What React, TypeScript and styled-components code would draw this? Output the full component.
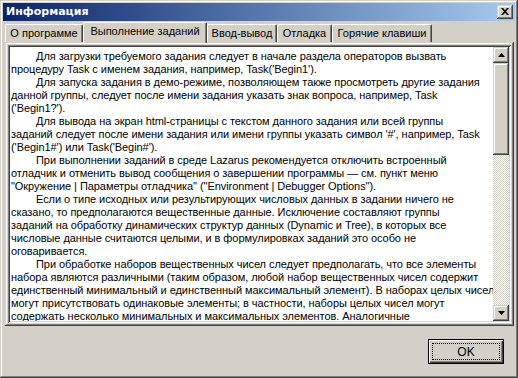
import React from "react";
import styled, { createGlobalStyle } from "styled-components";

const Global = createGlobalStyle`
  html, body { margin: 0; padding: 0; background: #D4D0C8; }
  body { width: 518px; height: 378px; overflow: hidden; }
`;

const raised = `
  box-shadow: inset -1px -1px #404040, inset 1px 1px #D4D0C8,
    inset -2px -2px #808080, inset 2px 2px #FFFFFF;
`;

const Window = styled.div`
  box-sizing: border-box;
  width: 518px;
  height: 378px;
  padding: 3px;
  background: #D4D0C8;
  ${raised}
  display: flex;
  flex-direction: column;
  font-family: "Liberation Sans", Arial, sans-serif;
  color: #000;
`;

const TitleBar = styled.div`
  height: 18px;
  flex: none;
  display: flex;
  align-items: center;
  justify-content: space-between;
  padding: 0 2px 0 3px;
  background: linear-gradient(to right, #0a246a, #a6caf0);
`;

const Title = styled.span`
  font-family: "DejaVu Sans", sans-serif;
  font-weight: bold;
  font-size: 11px;
  color: #fff;
  line-height: 18px;
`;

const CloseButton = styled.div`
  box-sizing: border-box;
  width: 16px;
  height: 14px;
  background: #D4D0C8;
  ${raised}
  display: flex;
  align-items: center;
  justify-content: center;
  padding: 0 1px 1px 0;
`;

const TabStrip = styled.div`
  height: 21px;
  flex: none;
  display: flex;
  align-items: flex-end;
  padding-left: 2px;
`;

const Tab = styled.div<{ $w: number; $active?: boolean }>`
  box-sizing: border-box;
  width: ${(p) => p.$w}px;
  height: ${(p) => (p.$active ? 21 : 18)}px;
  margin-bottom: ${(p) => (p.$active ? -1 : 0)}px;
  position: relative;
  z-index: ${(p) => (p.$active ? 2 : 0)};
  background: #D4D0C8;
  border-top: 1px solid #fff;
  border-left: 1px solid #fff;
  border-right: 1px solid #404040;
  border-radius: 2px 2px 0 0;
  box-shadow: inset -1px 0 #808080;
  font-size: 11px;
  line-height: ${(p) => (p.$active ? 17 : 16)}px;
  text-align: center;
  white-space: nowrap;
`;

const Panel = styled.div`
  box-sizing: border-box;
  height: 284px;
  flex: none;
  margin: 0 1px 0 2px;
  padding: 3px;
  background: #D4D0C8;
  ${raised}
`;

const Memo = styled.div`
  box-sizing: border-box;
  height: 100%;
  display: flex;
  padding: 2px;
  background: #fff;
  box-shadow: inset 1px 1px #808080, inset -1px -1px #fff,
    inset 2px 2px #404040, inset -2px -2px #D4D0C8;
`;

const TextArea = styled.div`
  flex: 1;
  overflow: hidden;
  padding: 3px 0 0 1px;
  font-size: 11px;
  letter-spacing: -0.06px;
`;

const Line = styled.div<{ $indent?: boolean }>`
  height: 13px;
  line-height: 13px;
  white-space: pre;
  padding-left: ${(p) => (p.$indent ? 25 : 0)}px;
`;

const ScrollBar = styled.div`
  width: 16px;
  flex: none;
  display: flex;
  flex-direction: column;
`;

const ArrowButton = styled.div`
  box-sizing: border-box;
  width: 16px;
  height: 16px;
  flex: none;
  background: #D4D0C8;
  ${raised}
  display: flex;
  align-items: center;
  justify-content: center;
`;

const Thumb = styled.div`
  box-sizing: border-box;
  height: 92px;
  flex: none;
  background: #D4D0C8;
  ${raised}
`;

const Track = styled.div`
  flex: 1;
  background-color: #D4D0C8;
  background-image: conic-gradient(#fff 0 90deg, #D4D0C8 90deg 180deg, #fff 180deg 270deg, #D4D0C8 270deg 360deg);
  background-size: 2px 2px;
`;

const Footer = styled.div`
  flex: 1;
  display: flex;
  justify-content: flex-end;
  align-items: flex-start;
  padding: 13px 11px 0 0;
`;

const Button = styled.div`
  box-sizing: border-box;
  width: 76px;
  height: 25px;
  border: 1px solid #000;
  background: #D4D0C8;
  box-shadow: inset 1px 1px #fff, inset -1px -1px #404040, inset -2px -2px #808080;
  padding: 3px;
  display: flex;
`;

const Focus = styled.div`
  flex: 1;
  border: 1px dotted #000;
  display: flex;
  align-items: center;
  justify-content: center;
  font-size: 12px;
`;

const lines: { t: string; i?: boolean }[] = [
  { t: "Для загрузки требуемого задания следует в начале раздела операторов вызвать", i: true },
  { t: "процедуру Task с именем задания, например, Task('Begin1')." },
  { t: "Для запуска задания в демо-режиме, позволяющем также просмотреть другие задания", i: true },
  { t: "данной группы, следует после имени задания указать знак вопроса, например, Task" },
  { t: "('Begin1?')." },
  { t: "Для вывода на экран html-страницы с текстом данного задания или всей группы", i: true },
  { t: "заданий следует после имени задания или имени группы указать символ '#', например, Task" },
  { t: "('Begin1#') или Task('Begin#')." },
  { t: "При выполнении заданий в среде Lazarus рекомендуется отключить встроенный", i: true },
  { t: "отладчик и отменить вывод сообщения о завершении программы — см. пункт меню" },
  { t: "\"Окружение | Параметры отладчика\" (\"Environment | Debugger Options\")." },
  { t: "Если о типе исходных или результирующих числовых данных в задании ничего не", i: true },
  { t: "сказано, то предполагаются вещественные данные. Исключение составляют группы" },
  { t: "заданий на обработку динамических структур данных (Dynamic и Tree), в которых все" },
  { t: "числовые данные считаются целыми, и в формулировках заданий это особо не" },
  { t: "оговаривается." },
  { t: "При обработке наборов вещественных чисел следует предполагать, что все элементы", i: true },
  { t: "набора являются различными (таким образом, любой набор вещественных чисел содержит" },
  { t: "единственный минимальный и единственный максимальный элемент). В наборах целых чисел" },
  { t: "могут присутствовать одинаковые элементы; в частности, наборы целых чисел могут" },
  { t: "содержать несколько минимальных и максимальных элементов. Аналогичные" },
];

const tabs = [
  { label: "О программе", w: 78 },
  { label: "Выполнение заданий", w: 124, active: true },
  { label: "Ввод-вывод", w: 70 },
  { label: "Отладка", w: 55 },
  { label: "Горячие клавиши", w: 100 },
];

const Arrow = ({ down }: { down?: boolean }) => (
  <svg width="7" height="4" viewBox="0 0 7 4" style={{ display: "block" }}>
    <path d={down ? "M0 0h7L3.5 4z" : "M3.5 0L7 4H0z"} fill="#000" />
  </svg>
);

export default function App() {
  return (
    <>
      <Global />
      <Window>
        <TitleBar>
          <Title>Информация</Title>
          <CloseButton>
            <svg width="8" height="7" viewBox="0 0 8 7" style={{ display: "block" }}>
              <path d="M0 0h2l2 2.3L6 0h2L5 3.5 8 7H6L4 4.7 2 7H0l3-3.5z" fill="#000" />
            </svg>
          </CloseButton>
        </TitleBar>
        <TabStrip>
          {tabs.map((t) => (
            <Tab key={t.label} $w={t.w} $active={t.active}>
              {t.label}
            </Tab>
          ))}
        </TabStrip>
        <Panel>
          <Memo>
            <TextArea>
              {lines.map((l, k) => (
                <Line key={k} $indent={l.i}>
                  {l.t}
                </Line>
              ))}
            </TextArea>
            <ScrollBar>
              <ArrowButton>
                <Arrow />
              </ArrowButton>
              <Thumb />
              <Track />
              <ArrowButton>
                <Arrow down />
              </ArrowButton>
            </ScrollBar>
          </Memo>
        </Panel>
        <Footer>
          <Button>
            <Focus>OK</Focus>
          </Button>
        </Footer>
      </Window>
    </>
  );
}
